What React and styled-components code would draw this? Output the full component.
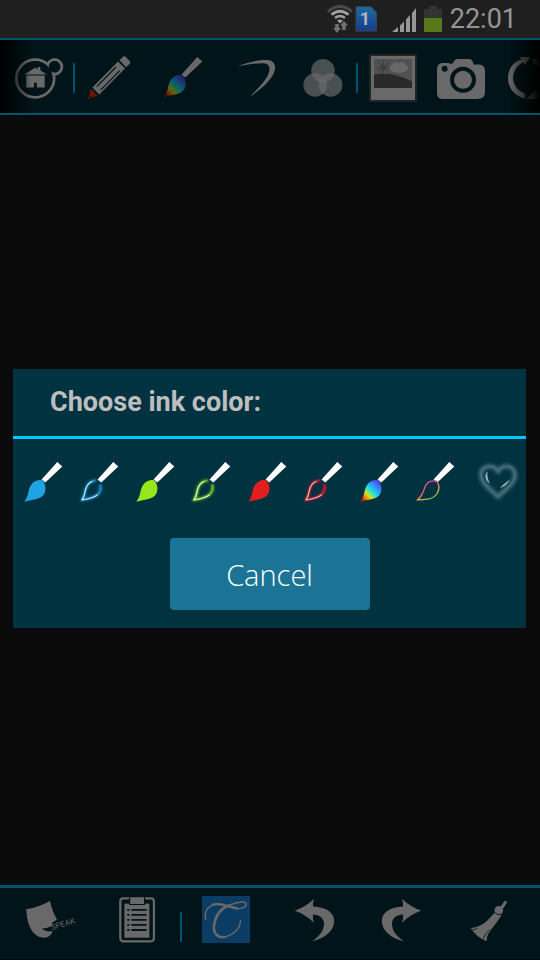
import React, { useState } from 'react'
import styled, { createGlobalStyle } from 'styled-components'

const GREY = '#696969'
const BAR = '#001419'

const BRUSH_BODY = 'M0.3 39.7C4 35 4 31 5 27.5C7 20.5 12.5 17 18 18.2C21.5 21.5 22.6 27 20.2 31.8C17 37.8 8.5 37.4 0.3 39.7Z'
const BRUSH_HANDLE = 'M33.3 0L38.3 4.5L21.3 20.6L17.6 17.4Z'

const inks = [
    { name: 'Blue', fill: '#1fa3e4' },
    { name: 'Blue glow', glow: '#1b9be6', core: '#d8f3ff' },
    { name: 'Green', fill: '#96e61c' },
    { name: 'Green glow', glow: '#7fd420', core: '#efffcb' },
    { name: 'Red', fill: '#e41e1e' },
    { name: 'Red glow', glow: '#e01c2c', core: '#ffc4c8' },
    { name: 'Rainbow', fill: 'url(#rainbow)' },
    { name: 'Rainbow outline', outline: 'url(#rainbowLine)' },
]

function InkBrush({ ink }) {
    return (
        <InkSvg viewBox="-1 0 40 40">
            <path d={BRUSH_HANDLE} fill="#fff" />
            {ink.fill && <path d={BRUSH_BODY} fill={ink.fill} />}
            {ink.outline && (
                <path d="M1.6 37.8C6 34 7.4 30 8.6 26C10.4 20 15 18 20.6 19.2C23.6 23 23.4 28 20.8 32C16.6 38 9 37.6 1.6 37.8Z" fill="none" stroke={ink.outline} strokeWidth="1.3" />
            )}
            {ink.glow && (
                <g fill="none" strokeLinejoin="round" strokeLinecap="round">
                    <path d="M15 18.6C9 19 6.4 24 5.4 28C4.6 32 4.4 35 1.8 38C8 37 15 36 18.6 31.6C20.8 28.6 21 26 20.4 23.4" stroke={ink.glow} strokeWidth="3.2" opacity="0.7" filter="url(#softGlow)" />
                    <path d="M15 18.6C9 19 6.4 24 5.4 28C4.6 32 4.4 35 1.8 38C8 37 15 36 18.6 31.6C20.8 28.6 21 26 20.4 23.4" stroke={ink.glow} strokeWidth="1.4" opacity="0.7" />
                    <path d="M12 19.4C8 21 6.2 25 5.4 28C4.6 32 4.4 35 1.8 38C8 37 14 36 17.6 32.6" stroke={ink.core} strokeWidth="1.1" opacity="0.9" />
                </g>
            )}
        </InkSvg>
    )
}

function HeartInk() {
    const heart = 'M27 9.5C23 1.6 10 3 10 13C10 21.6 20 27.6 27 34.8C34 27.6 44 21.6 44 13C44 3 31 1.6 27 9.5Z'
    return (
        <InkSvg viewBox="0 0 40 40">
            <g fill="none" strokeLinejoin="round">
                <path d={heart} stroke="#6f929d" strokeWidth="5.4" opacity="0.5" filter="url(#glow)" />
                <path d={heart} stroke="#7d9aa3" strokeWidth="1.6" opacity="0.25" />
            </g>
            <path d="M16.5 9.5C13 12 14 19 19 21.5C16.5 17 16 13 16.5 9.5Z" fill="#9fb3b9" />
            <path d="M29 26.2C31.4 23 35 20.4 38.6 17.8C37 22 33 24.6 29 26.2Z" fill="#9fb3b9" />
        </InkSvg>
    )
}

function StatusIcons() {
    return (
        <>
            <WifiIcon width="26" height="28" viewBox="0 0 26 28">
                <g fill="none" strokeWidth="3">
                    <path d="M1 6.5Q13 -3.5 25 6.5" stroke="#4a4a4a" />
                    <path d="M4.5 9.7Q13 2.8 21.5 9.7" stroke="#a0a0a0" />
                    <path d="M8 13Q13 9 18 13" stroke="#a0a0a0" strokeWidth="2.4" />
                </g>
                <path d="M10 15.6Q13 13.2 16 15.6L13 18.5Z" fill="#a0a0a0" />
                <path d="M8.2 19H11.8V23H14L10 28L6 23H8.2Z" fill="#707070" />
                <path d="M15.2 25V20.5H13L17 16L21 20.5H18.8V25Z" fill="#707070" />
            </WifiIcon>
            <SimIcon width="22" height="26" viewBox="0 0 22 26">
                <defs>
                    <linearGradient id="sim" x2="0" y2="1">
                        <stop stopColor="#1e6aa0" />
                        <stop offset="1" stopColor="#143c90" />
                    </linearGradient>
                </defs>
                <path d="M1 0.8H16L21.4 6V25H1Z" fill="url(#sim)" stroke="#3c4650" />
                <text x="10" y="19" textAnchor="middle" fill="#b4b4b4" fontSize="18" fontWeight="700">1</text>
            </SimIcon>
            <SignalIcon width="24" height="24" viewBox="0 0 24 24">
                <path d="M0 24L6 19V24ZM8 17.5L12 13.5V24H8ZM14 11.5L18 7V24H14ZM20 5L24 0V24H20Z" fill="#969696" />
            </SignalIcon>
            <svg width="18" height="26" viewBox="0 0 18 26">
                <path d="M0 3H5V0H13V3H18V12H0Z" fill="#333" />
                <path d="M0 12H18V26H0Z" fill="#58781a" />
            </svg>
        </>
    )
}

function HomeIcon() {
    return (
        <Icon viewBox="0 0 48 48">
            <circle cx="20.2" cy="24.5" r="18.8" fill="none" stroke={GREY} strokeWidth="3" />
            <circle cx="39.6" cy="12.8" r="7.2" fill="none" stroke={GREY} strokeWidth="3" />
            <circle cx="20.2" cy="24.5" r="17.4" fill={BAR} />
            <circle cx="39.6" cy="12.8" r="5.8" fill={BAR} />
            <path d="M9.3 20.4L20 13.8L22.6 15.2V13H25.4V16.6L32 20.4ZM11.3 21.4H29.7V33.4H21.8V28.8H19V33.4H11.3Z" fill={GREY} />
        </Icon>
    )
}

function PencilIcon() {
    return (
        <Icon viewBox="0 0 48 48">
            <path d="M38.5 2.3Q40 2 41 3L45 7.5Q45.5 9 44.6 10L41 13.3L34.5 6.3Z" fill={GREY} />
            <path d="M33 7.5L40 14.6L14.3 40.6L7.4 33.4Z" fill={GREY} />
            <path d="M31 13L11.8 32.6M34.8 16.6L15.6 36.2" stroke={BAR} strokeWidth="1.2" />
            <path d="M5.8 34.8L12.8 42L6.2 43.6L4.2 41.4Z" fill="#701404" />
            <path d="M3.6 42L5.6 44.2L2.5 45.2Z" fill="#701404" />
        </Icon>
    )
}

function BrushIcon() {
    return (
        <Icon viewBox="-8 -3 48 48">
            <path d={BRUSH_HANDLE} fill={GREY} />
            <path d={BRUSH_BODY} fill="url(#rainbow)" />
            <path d={BRUSH_BODY} fill="#000" opacity="0.55" />
        </Icon>
    )
}

function CurveIcon() {
    return (
        <Icon viewBox="0 0 48 48">
            <path d="M10.7 12.3C21 8.3 31 6 39 6C46 6 49 9.5 47.8 16C46 25 35 34.5 23 42.7C33 32.5 41 24 42.4 16.4C43 11.4 40.6 9.4 36 9.2C28 9 19 11 10.7 12.3Z" fill={GREY} />
        </Icon>
    )
}

function CirclesIcon() {
    return (
        <Icon viewBox="0 0 48 48">
            <g fill={GREY} fillOpacity="0.7">
                <circle cx="25" cy="16.8" r="11.8" />
                <circle cx="17.2" cy="31" r="11.8" />
                <circle cx="32.6" cy="31" r="11.8" />
            </g>
        </Icon>
    )
}

function PictureIcon() {
    return (
        <Icon viewBox="0 0 48 48">
            <path d="M1 0H49V48H1Z" fill="#222425" />
            <path d="M3 2H47V46H3Z" fill={GREY} />
            <path d="M6 5H44V34H6Z" fill="#505050" />
            <path d="M6 20.5C20 18 34 22 44 27.5V34H6Z" fill="#292929" />
            <path d="M15.4 6V21M8 13.6H23M10.2 8.4L20.6 18.8M20.6 8.4L10.2 18.8" stroke="#383838" strokeWidth="0.8" />
            <circle cx="15.4" cy="13.6" r="2.6" fill="#3c3c3c" />
            <ellipse cx="31" cy="14" rx="9.4" ry="4.8" fill="#686868" />
            <circle cx="28" cy="11.6" r="3.4" fill="#686868" />
            <circle cx="34" cy="11.6" r="3.4" fill="#686868" />
        </Icon>
    )
}

function CameraIcon() {
    return (
        <Icon viewBox="0 0 48 48">
            <path d="M6 9H12L16 10L19 6Q19.5 5 21 5H33.5Q35 5 36 6.5L38 10.5H43Q49 11 49 17V38Q49 45 42 45H7Q1 45 1 39V15Q1 10 6 9Z" fill={GREY} />
            <circle cx="27" cy="25.8" r="13" fill={BAR} />
            <circle cx="27" cy="25.8" r="9" fill={GREY} />
            <circle cx="8.6" cy="14.7" r="3" fill={BAR} />
        </Icon>
    )
}

function RotateIcon() {
    return (
        <Icon viewBox="0 0 48 48">
            <path d="M15.7 3H26.8L20.7 11L19.5 8.2C6 14 5 34 21 39.6V44.4C-1 40 -1 10 17.8 5.2Z" fill={GREY} />
            <path d="M22.7 45L31 36.7L32 39C44 34 46 18 29 9V4C50 10 52 36 34 43L35 45Z" fill={GREY} />
        </Icon>
    )
}

function SpeakIcon() {
    return (
        <Icon viewBox="0 0 48 48">
            <path d="M5.3 14.3Q18 12 29 6Q31 16 36 24.5L31.4 27.6L30.6 31Q26 33.6 21.2 33.6Q24 37.4 31.4 36L30.4 39Q27.6 42.8 22.3 42.7C10 41.6 5.6 27 5.3 14.3Z" fill={GREY} />
            <text x="31" y="35.2" transform="rotate(-17 31 35.2)" fill={GREY} fontSize="8">SPEAK</text>
        </Icon>
    )
}

function ClipboardIcon() {
    return (
        <Icon viewBox="0 0 48 48">
            <rect x="9.3" y="3.3" width="33.6" height="43" rx="3" fill="none" stroke={GREY} strokeWidth="2.2" />
            <path d="M13.4 8.6H38.4V42.7H13.4Z" fill={GREY} />
            <path d="M18 1H34V10H18Z" fill={BAR} />
            <path d="M19.2 2.2H33V9H19.2Z" fill={GREY} />
            <path d="M16.2 14.8H18.4M20.4 14.8H35.6M16.2 19.8H18.4M20.4 19.8H35.6M16.2 24.8H18.4M20.4 24.8H35.6M16.2 29.8H18.4M20.4 29.8H35.6M16.2 35H18.4M20.4 35H35.6" stroke={BAR} strokeWidth="1.8" />
        </Icon>
    )
}

function ScriptIcon() {
    return (
        <Icon viewBox="0 0 48 48">
            <path d="M1 1H49V48H1Z" fill="#0b3c64" />
            <g fill="none" stroke={GREY} strokeLinecap="round">
                <path d="M4.8 24.4C2.4 15 9 8.6 18 9C25 9.4 29 13.6 36 13.8C42 14 46.5 11 45 8C42 5 30 9 25 12" strokeWidth="1.5" />
                <path d="M12 9.6C20 7.4 28 12.4 36 13.2" strokeWidth="2.4" />
                <path d="M28 10.4C20 13 15 20 13.2 29C11.6 38 16 42.6 23 42.2" strokeWidth="2.6" />
                <path d="M23 42.2C31 41 39.6 34 39.4 25.6" strokeWidth="1.4" />
            </g>
        </Icon>
    )
}

function ArrowIcon({ flipped }) {
    return (
        <Icon viewBox="0 0 48 48">
            <path
                transform={flipped ? 'translate(44 0) scale(-1 1)' : undefined}
                d="M3.7 15.8C11 13 18 9 23 3.7Q21.6 8 22 11.6C36 12.4 43.2 18 43.2 26.4C42.6 36 34 43 21.2 46.2C29 41 33 35.4 33 28.6C32.6 22.6 28.6 19.6 22 19.4Q21.4 23.6 23 27.7C17 22 11 18 3.7 15.8Z"
                fill={GREY}
            />
        </Icon>
    )
}

function BroomIcon() {
    return (
        <Icon viewBox="0 0 48 48">
            <path d="M34.4 7.4L30.8 12.6" stroke={GREY} strokeWidth="3" strokeLinecap="round" />
            <path d="M23.6 17.6Q27 21.4 30.8 19.4C26 28 19 35 17.4 38.6Q15.6 42 15.8 45.7Q12.6 45.4 11.4 44.2Q5 41 -0.3 33.3C10 32.4 17 26 23.6 17.6Z" fill={GREY} />
            <path d="M18.6 34.6Q13.6 38.6 12 44.6M-0.4 35Q4 34.8 6.4 33.4" fill="none" stroke={BAR} strokeWidth="0.8" />
            <circle cx="27.8" cy="15.4" r="4.3" fill={GREY} />
            <path d="M24 17.8Q27 20.8 31 19.2" fill="none" stroke={BAR} strokeWidth="0.8" />
        </Icon>
    )
}

export default function App() {
    const [ink, setInk] = useState(null)

    return (
        <Page>
            <GlobalStyle />
            <Defs aria-hidden="true">
                <defs>
                    <linearGradient id="rainbow" x1="0.9" y1="0.1" x2="0.1" y2="1">
                        <stop offset="0.05" stopColor="#4a4ee8" />
                        <stop offset="0.28" stopColor="#2fa0ff" />
                        <stop offset="0.48" stopColor="#20e6d0" />
                        <stop offset="0.66" stopColor="#d8e020" />
                        <stop offset="0.8" stopColor="#f08a10" />
                        <stop offset="0.95" stopColor="#c81408" />
                    </linearGradient>
                    <linearGradient id="rainbowLine" x1="0.2" y1="0" x2="0.9" y2="1">
                        <stop offset="0.1" stopColor="#c85ac8" />
                        <stop offset="0.4" stopColor="#f0506e" />
                        <stop offset="0.6" stopColor="#e8a05a" />
                        <stop offset="0.8" stopColor="#8cc050" />
                    </linearGradient>
                    <filter id="glow" x="-50%" y="-50%" width="200%" height="200%">
                        <feGaussianBlur stdDeviation="1.4" />
                    </filter>
                    <filter id="softGlow" x="-50%" y="-50%" width="200%" height="200%">
                        <feGaussianBlur stdDeviation="0.8" />
                    </filter>
                </defs>
            </Defs>

            <StatusBar>
                <StatusIcons />
                <Clock>22:01</Clock>
            </StatusBar>

            <TopBar>
                <Tool aria-label="Home"><HomeIcon /></Tool>
                <Divider />
                <ToolGroup $gap={23}>
                    <Tool aria-label="Pencil"><PencilIcon /></Tool>
                    <Tool aria-label="Brush"><BrushIcon /></Tool>
                    <Tool aria-label="Stroke"><CurveIcon /></Tool>
                    <Tool aria-label="Opacity"><CirclesIcon /></Tool>
                </ToolGroup>
                <Divider />
                <ToolGroup $gap={20}>
                    <Tool aria-label="Picture"><PictureIcon /></Tool>
                    <Tool aria-label="Camera"><CameraIcon /></Tool>
                    <Tool aria-label="Rotate"><RotateIcon /></Tool>
                </ToolGroup>
            </TopBar>

            <Canvas />

            <BottomBar>
                <Tool aria-label="Speak"><SpeakIcon /></Tool>
                <Tool aria-label="Clipboard"><ClipboardIcon /></Tool>
                <BottomDivider />
                <Tool aria-label="Text"><ScriptIcon /></Tool>
                <Tool aria-label="Undo"><ArrowIcon /></Tool>
                <Tool aria-label="Redo"><ArrowIcon flipped /></Tool>
                <Tool aria-label="Clear"><BroomIcon /></Tool>
            </BottomBar>

            <Overlay>
                <Dialog role="dialog" aria-labelledby="ink-title">
                    <Title id="ink-title">Choose ink color:</Title>
                    <InkRow>
                        {inks.map((item) => (
                            <InkButton
                                key={item.name}
                                aria-label={item.name}
                                aria-pressed={ink === item.name}
                                onClick={() => setInk(item.name)}
                            >
                                <InkBrush ink={item} />
                            </InkButton>
                        ))}
                        <InkButton aria-label="Heart" aria-pressed={ink === 'Heart'} onClick={() => setInk('Heart')}>
                            <HeartInk />
                        </InkButton>
                    </InkRow>
                    <CancelButton onClick={() => setInk(null)}>Cancel</CancelButton>
                </Dialog>
            </Overlay>
        </Page>
    )
}

const GlobalStyle = createGlobalStyle`
    * {
        box-sizing: border-box;
    }

    body {
        margin: 0;
        background: #0a0a0a;
        font-family: Roboto, sans-serif;
    }

    button {
        padding: 0;
        border: none;
        background: none;
        font: inherit;
        cursor: pointer;
    }
`

const Page = styled.div`
    min-height: 100vh;
    display: flex;
    flex-direction: column;
    overflow: hidden;
`

const Defs = styled.svg`
    position: absolute;
    width: 0;
    height: 0;
`

const StatusBar = styled.header`
    height: 38px;
    padding-right: 23px;
    display: flex;
    align-items: center;
    justify-content: flex-end;
    background: #1f1f1f;

    svg {
        flex: none;
        margin-right: 8px;
    }
`

const WifiIcon = styled.svg`
    && {
        margin-right: 2px;
    }
`

const SimIcon = styled.svg`
    && {
        margin-right: 15px;
    }
`

const SignalIcon = styled.svg`
    margin-top: 2px;
`

const Clock = styled.time`
    color: #969696;
    font-size: 27px;
    font-weight: 400;
    line-height: 38px;
`

const TopBar = styled.nav`
    position: relative;
    height: 77px;
    padding: 14px 0 0 15px;
    display: flex;
    align-items: flex-start;
    overflow: hidden;
    background: ${BAR};
    border-top: 2px solid #00546a;
    border-bottom: 2px solid #00546a;

    &::after {
        content: '';
        position: absolute;
        inset: 0;
        pointer-events: none;
        background:
            linear-gradient(to right, #000, transparent 32px),
            linear-gradient(to left, #000, transparent 32px);
    }
`

const ToolGroup = styled.div`
    display: flex;
    flex: none;
    gap: ${(props) => props.$gap}px;
`

const Tool = styled.button`
    display: flex;
    flex: none;
    justify-content: center;
`

const Icon = styled.svg`
    display: block;
    width: 48px;
    height: 48px;
    overflow: visible;
`

const Divider = styled.div`
    flex: none;
    width: 2px;
    height: 30px;
    margin: 9px 10px 0;
    background: #00546a;
`

const Canvas = styled.main`
    flex: 1;
`

const BottomBar = styled.nav`
    height: 75px;
    padding-top: 7px;
    display: grid;
    grid-template-columns: repeat(2, 1fr) 0 repeat(4, 1fr);
    background: ${BAR};
    border-top: 3px solid #00546a;
    border-bottom: 1px solid #05050c;
`

const BottomDivider = styled(Divider)`
    margin: 17px 0 0;
`

const Overlay = styled.div`
    position: fixed;
    inset: 38px 0 1px;
    padding: 0 14px 0 13px;
    display: flex;
    align-items: center;
`

const Dialog = styled.section`
    width: 100%;
    padding-bottom: 18px;
    display: flex;
    flex-direction: column;
    background: #003240;
`

const Title = styled.h1`
    margin: 0;
    padding: 0 37px;
    color: #bebebe;
    font-size: 27px;
    font-weight: 700;
    line-height: 67px;
    border-bottom: 3px solid #00c8ff;
`

const InkRow = styled.div`
    padding: 23px 7px 36px 2px;
    display: grid;
    grid-template-columns: repeat(9, 1fr);
`

const InkButton = styled.button`
    display: flex;
    justify-content: center;
`

const InkSvg = styled.svg`
    display: block;
    width: 40px;
    height: 40px;
    overflow: visible;
`

const CancelButton = styled.button`
    && {
        align-self: center;
        width: 200px;
        height: 72px;
        border-radius: 4px;
        background: #1b7495;
        color: #fff;
        font-family: "Open Sans", "Noto Sans", sans-serif;
        font-size: 29px;
        font-weight: 300;
    }
`
